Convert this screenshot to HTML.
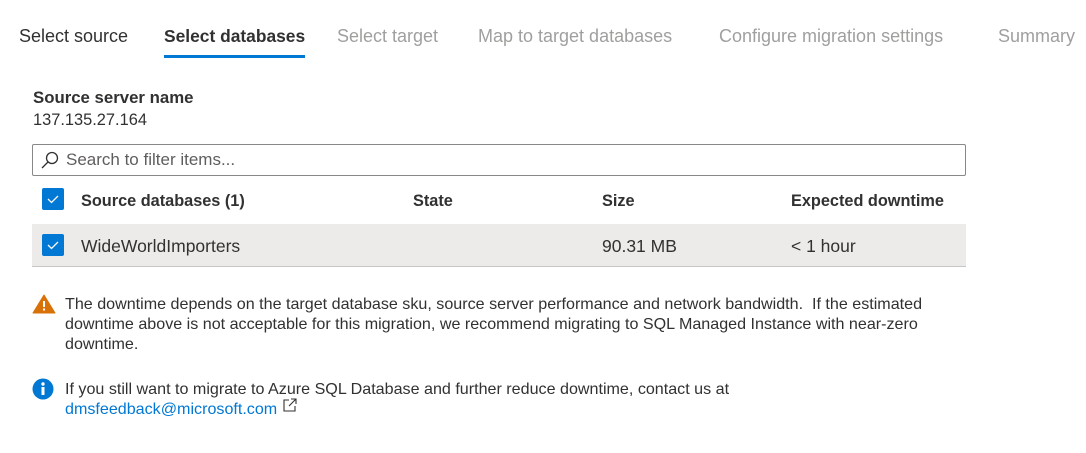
<!DOCTYPE html>
<html><head><style>
body{margin:0;width:1086px;height:453px;background:#fff;font-family:"Liberation Sans",sans-serif;color:#323130;position:relative;overflow:hidden}
.a{position:absolute;white-space:nowrap}
.tab{font-size:18px;top:26px;color:#a19f9d}
.cb{position:absolute;width:22px;height:22px;background:#0078d4;border-radius:2px}
.cb svg{position:absolute;left:3px;top:4px}
.h{font-size:16.3px;font-weight:bold;top:192px}
.msg{font-size:16.1px;line-height:20px}
</style></head><body>
<div class="a tab" style="left:19px;color:#323130">Select source</div>
<div class="a tab" style="left:164px;color:#323130;font-weight:bold;font-size:17.4px">Select databases</div>
<div style="position:absolute;left:164px;top:55px;width:141px;height:3px;background:#0078d4"></div>
<div class="a tab" style="left:337px">Select target</div>
<div class="a tab" style="left:478px">Map to target databases</div>
<div class="a tab" style="left:719px">Configure migration settings</div>
<div class="a tab" style="left:998px">Summary</div>

<div class="a" style="left:33px;top:88px;font-size:16.8px;font-weight:bold">Source server name</div>
<div class="a" style="left:33px;top:111px;font-size:16.4px">137.135.27.164</div>

<div style="position:absolute;left:32px;top:144px;width:932px;height:30px;border:1px solid #8a8886;border-radius:2px"></div>
<svg class="a" style="left:40px;top:150px" width="20" height="20" viewBox="0 0 20 20"><circle cx="12" cy="8" r="5.5" fill="none" stroke="#323130" stroke-width="1.3"/><path d="M8 12L2 18" stroke="#323130" stroke-width="1.3"/></svg>
<div class="a" style="left:66px;top:150px;font-size:17px;color:#605e5c">Search to filter items...</div>

<div class="cb" style="left:42px;top:188px"><svg width="16" height="14"><path d="M3 7l3.5 3.5L13 4" fill="none" stroke="#fff" stroke-width="1.3"/></svg></div>
<div class="a h" style="left:81px">Source databases (1)</div>
<div class="a h" style="left:413px">State</div>
<div class="a h" style="left:602px">Size</div>
<div class="a h" style="left:791px">Expected downtime</div>

<div style="position:absolute;left:32px;top:224px;width:934px;height:42px;background:#edebe9;border-bottom:1px solid #c8c6c4"></div>
<div class="cb" style="left:42px;top:234px"><svg width="16" height="14"><path d="M3 7l3.5 3.5L13 4" fill="none" stroke="#fff" stroke-width="1.3"/></svg></div>
<div class="a" style="left:81px;top:236px;font-size:17.5px">WideWorldImporters</div>
<div class="a" style="left:602px;top:236px;font-size:17.5px">90.31 MB</div>
<div class="a" style="left:791px;top:236px;font-size:17.5px">&lt; 1 hour</div>

<svg class="a" style="left:32px;top:294px" width="24" height="20" viewBox="0 0 24 20"><path d="M12 1L23 19H1Z" fill="#d87208" stroke="#d87208" stroke-linejoin="round"/><rect x="11" y="7" width="2" height="6" fill="#fff"/><rect x="11" y="14.5" width="2" height="2" fill="#fff"/></svg>
<div class="a msg" style="left:65px;top:294px">The downtime depends on the target database sku, source server performance and network bandwidth.&nbsp; If the estimated<br>downtime above is not acceptable for this migration, we recommend migrating to SQL Managed Instance with near-zero<br>downtime.</div>

<svg class="a" style="left:32px;top:378px" width="22" height="22" viewBox="0 0 22 22"><circle cx="11" cy="11" r="10.5" fill="#0078d4"/><rect x="9.5" y="9" width="3" height="8" fill="#fff"/><circle cx="11" cy="6" r="1.7" fill="#fff"/></svg>
<div class="a msg" style="left:65px;top:379px">If you still want to migrate to Azure SQL Database and further reduce downtime, contact us at<br><span style="color:#0078d4">dmsfeedback@microsoft.com</span></div>
<svg class="a" style="left:282px;top:397px" width="16" height="16" viewBox="0 0 16 16"><path d="M7 3H2v11h11V9M9 2h5v5M14 2L7 9" fill="none" stroke="#323130" stroke-width="1.1"/></svg>
</body></html>
